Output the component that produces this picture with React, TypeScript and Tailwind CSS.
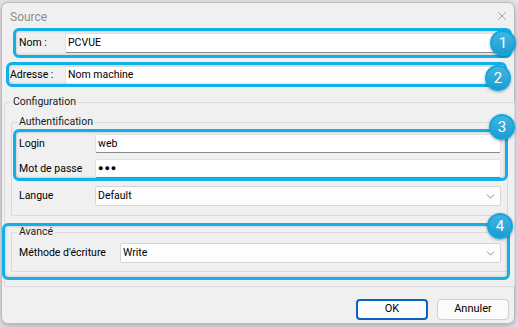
import { ChevronDown, X } from "lucide-react";

const font = { fontFamily: "Roboto, 'Liberation Sans', sans-serif" };

function Badge({ n, className }: { n: number; className: string }) {
  return (
    <div
      className={`absolute w-[26px] h-[26px] rounded-full bg-gradient-to-b from-[#3fb6e4] to-[#1a9ccf] border-2 border-[#12a6df] shadow-[0_1px_3px_rgba(0,0,0,0.35)] flex items-center justify-center text-white text-[15px] ${className}`}
    >
      {n}
    </div>
  );
}

function TextBox({ value, className }: { value: string; className: string }) {
  return (
    <div
      className={`h-[19px] bg-white border border-[#e3e3e3] border-b-[#8a8a8a] rounded-[2px] flex items-center px-[2px] text-black ${className}`}
    >
      {value}
    </div>
  );
}

function Select({ value, className }: { value: string; className: string }) {
  return (
    <div
      className={`h-[20px] bg-[#fdfdfd] border border-[#d5d5d5] rounded-[2px] flex items-center justify-between pl-[2px] pr-[3px] text-black ${className}`}
    >
      <span>{value}</span>
      <ChevronDown size={13} strokeWidth={1.2} className="text-[#555]" />
    </div>
  );
}

export default function App() {
  return (
    <div className="w-[518px] h-[327px] bg-[#e6e2e8] overflow-hidden text-[10.5px]" style={font}>
      <div className="ml-px mt-[2px] w-[514px] h-[322px] rounded-[7px] border border-[#bcbcbc] bg-[#f0f0f0] shadow-[0_2px_6px_rgba(0,0,0,0.25)]">
        {/* title bar */}
        <div className="h-[26px] flex items-center justify-between pl-[8px] pr-[5px]">
          <span className="text-[#8e8e8e] text-[12px] pt-[1px]">Source</span>
          <X size={14} strokeWidth={1} className="text-[#6e6e6e]" />
        </div>

        {/* Nom */}
        <div className="relative mt-[4px] ml-[17px] w-[478px] h-[20px] flex items-center">
          <span className="w-[46px]">Nom :</span>
          <TextBox value="PCVUE" className="w-[432px] h-[20px]" />
          <div className="absolute -left-[6px] -top-[5px] -bottom-[5px] -right-[15px] border-[3px] border-[#12b0ea] rounded-[6px] shadow-[inset_0_0_3px_rgba(0,0,0,0.25)]" />
          <Badge n={1} className="left-[471px] -top-[3px]" />
        </div>

        {/* Adresse */}
        <div className="relative mt-[13px] ml-[8px] w-[487px] h-[18px] flex items-center">
          <span className="w-[55px]">Adresse :</span>
          <TextBox value="Nom machine" className="w-[432px] h-[18px]" />
          <div className="absolute -left-[4px] -top-[4px] -bottom-[3px] -right-[10px] border-[3px] border-[#12b0ea] rounded-[6px] shadow-[inset_0_0_3px_rgba(0,0,0,0.25)]" />
          <Badge n={2} className="left-[475px] -top-px" />
        </div>

        {/* Configuration */}
        <fieldset className="mt-[10px] ml-[2px] w-[509px] h-[193px] border border-[#dadada] rounded-[2px] px-[6px]">
          <legend className="px-[2px] leading-[16px] text-[#1a1a1a]">Configuration</legend>

          <fieldset className="mt-[4px] w-[497px] h-[102px] border border-[#dadada] rounded-[2px] pl-[7px]">
            <legend className="-ml-[2px] px-[2px] leading-[16px] text-[#1a1a1a]">Authentification</legend>

            <div className="relative mt-[4px] w-[482px] flex flex-col gap-[6px]">
              <div className="flex items-center h-[19px]">
                <span className="w-[76px]">Login</span>
                <TextBox value="web" className="w-[406px]" />
              </div>
              <div className="flex items-center h-[19px]">
                <span className="w-[76px]">Mot de passe</span>
                <TextBox value="●●●" className="w-[406px] text-[9px] tracking-[1px]" />
              </div>
              <div className="absolute -left-[6px] -top-[5px] -bottom-[3px] -right-[7px] border-[3px] border-[#12b0ea] rounded-[6px] shadow-[inset_0_0_3px_rgba(0,0,0,0.25)]" />
              <Badge n={3} className="left-[470px] -top-[20px]" />
            </div>

            <div className="mt-[8px] flex items-center h-[20px]">
              <span className="w-[76px]">Langue</span>
              <Select value="Default" className="w-[406px]" />
            </div>
          </fieldset>

          <fieldset className="relative mt-[8px] w-[497px] h-[48px] border border-[#dadada] rounded-[2px] pl-[7px]">
            <legend className="-ml-[2px] px-[2px] leading-[16px] text-[#1a1a1a]">Avancé</legend>
            <div className="mt-[3px] flex items-center h-[20px]">
              <span className="w-[101px]">Méthode d'écriture</span>
              <Select value="Write" className="w-[381px]" />
            </div>
            <div className="absolute -left-[10px] -top-[17px] -bottom-[9px] -right-[3px] border-[3px] border-[#12b0ea] rounded-[6px] shadow-[inset_0_0_3px_rgba(0,0,0,0.25)]" />
            <Badge n={4} className="left-[475px] -top-[27px]" />
          </fieldset>
        </fieldset>

        {/* buttons */}
        <div className="mt-[12px] pr-[5px] flex justify-end gap-[9px]">
          <button className="w-[72px] h-[21px] rounded-[4px] border-2 border-[#0a63c2] bg-[#fbfbfb] text-black text-[11px]">OK</button>
          <button className="w-[72px] h-[21px] rounded-[4px] border border-[#cfcfcf] bg-[#fbfbfb] text-black text-[11px]">Annuler</button>
        </div>
      </div>
    </div>
  );
}
